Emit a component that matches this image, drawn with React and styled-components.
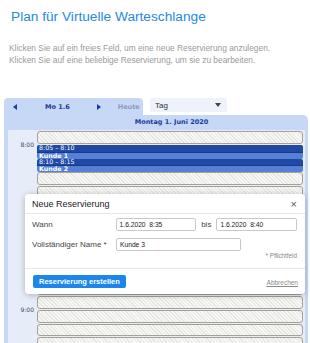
import React from 'react';
import styled, {createGlobalStyle} from 'styled-components';

const GlobalStyle = createGlobalStyle`
    body {
        margin: 0;
        background: #fff;
        font-family: 'Liberation Sans', Arial, sans-serif;
    }
`

const Page = styled.div`
    width: 310px;
    height: 343px;
    overflow: hidden;
    padding: 8px 0 0 0;
    box-sizing: border-box;
`

const Title = styled.h1`
    margin: 0 0 0 11px;
    font-size: 13.7px;
    line-height: 18px;
    font-weight: normal;
    color: #2689e3;
`

const Hint = styled.p`
    margin: 16px 0 0 9px;
    font-size: 8.4px;
    line-height: 12px;
    color: #9a9a9a;
`

const Calendar = styled.div`
    position: relative;
    margin: 32px 2px 0 4px;
    font-family: 'DejaVu Sans', Verdana, sans-serif;
`

const TopRow = styled.div`
    display: flex;
    align-items: flex-start;
    height: 17px;
`

const NavTab = styled.div`
    width: 139px;
    height: 17px;
    background: #c7d8f6;
    border-radius: 4px 4px 0 0;
    display: flex;
    align-items: center;
    box-sizing: border-box;
    padding: 1px 0 0 9px;
`

const Arrow = styled.span`
    width: 0;
    height: 0;
    border-top: 3.5px solid transparent;
    border-bottom: 3.5px solid transparent;
    border-right: ${p => p.dir === 'left' ? '4px solid #1b3a9e' : 'none'};
    border-left: ${p => p.dir === 'right' ? '4px solid #1b3a9e' : 'none'};
    margin-right: ${p => p.gap}px;
`

const NavLabel = styled.span`
    font-size: 6.5px;
    font-weight: bold;
    color: ${p => p.muted ? '#8d9bb5' : '#1b3a9e'};
    margin-right: ${p => p.gap}px;
`

const Select = styled.div`
    margin: 0 0 0 7px;
    width: 77px;
    height: 14px;
    background: #eef2fa;
    border-radius: 2px;
    display: flex;
    align-items: center;
    justify-content: space-between;
    box-sizing: border-box;
    padding: 0 6px 0 5px;
    font-family: 'Liberation Sans', Arial, sans-serif;
    font-size: 8px;
    color: #333;
`

const Caret = styled.span`
    width: 0;
    height: 0;
    border-left: 3px solid transparent;
    border-right: 3px solid transparent;
    border-top: 4px solid #444;
`

const Panel = styled.div`
    background: #c7d8f6;
    border-radius: 0 5px 0 0;
    padding: 0 3px 0 4px;
`

const DayHeader = styled.div`
    height: 15px;
    line-height: 15px;
    text-align: center;
    font-size: 6.5px;
    font-weight: bold;
    color: #1b3a9e;
    padding-left: 30px;
`

const Grid = styled.div`
    display: grid;
    grid-template-columns: 29px 1fr;
    grid-auto-rows: 13.75px;
    background: #e6edf9;
    padding: 1px 2px 0 0;
`

const TimeLabel = styled.div`
    grid-column: 1;
    grid-row: ${p => p.row};
    font-size: 6px;
    line-height: 8px;
    color: #3a4a6a;
    text-align: right;
    padding-right: 3px;
    margin-top: -4px;
`

const Slot = styled.div`
    grid-column: 2;
    grid-row: ${p => p.row};
    height: 12.75px;
    box-sizing: border-box;
    border: 1px solid #a3a294;
    border-bottom-width: 1.5px;
    border-radius: 3px;
    background: repeating-linear-gradient(45deg, #f7f7f6 0 1.6px, #e6e6e3 1.6px 2.6px);
`

const Event = styled.div`
    grid-column: 2;
    grid-row: ${p => p.row};
    height: 13.75px;
    display: flex;
    flex-direction: column;
    border-radius: 2px;
    overflow: hidden;
    color: #fff;
    font-size: 6.3px;
`

const EventPart = styled.div`
    flex: 1;
    line-height: 6.9px;
    padding-left: 2px;
    font-weight: ${p => p.strong ? 'bold' : 'normal'};
    background: ${p => p.strong ? '#5580d6' : '#2049a6'};
    border-bottom: ${p => p.strong ? 'none' : '0.5px solid #173a8a'};
`

const Dialog = styled.div`
    position: absolute;
    left: 21px;
    top: 96px;
    width: 280px;
    background: #fff;
    border-radius: 4px;
    box-shadow: 0 1px 6px rgba(0, 0, 0, 0.25);
    font-family: 'Liberation Sans', Arial, sans-serif;
    color: #333;
`

const DialogHeader = styled.div`
    height: 19px;
    display: flex;
    align-items: center;
    justify-content: space-between;
    padding: 0 8px 0 7px;
    border-bottom: 1px solid #e6e6e6;
    font-size: 9px;
    color: #222;
`

const Close = styled.span`
    font-size: 11px;
    color: #555;
`

const DialogBody = styled.div`
    padding: 4px 8px 0 7px;
    border-bottom: 1px solid #e6e6e6;
    height: 50px;
`

const FieldRow = styled.div`
    display: flex;
    align-items: center;
    margin-bottom: ${p => p.gap}px;
`

const Label = styled.span`
    width: 84px;
    font-size: 8px;
    color: #444;
`

const Input = styled.div`
    width: ${p => p.w}px;
    height: 13px;
    box-sizing: border-box;
    border: 1px solid #c9c9c9;
    border-radius: 2px;
    font-size: 6.7px;
    line-height: 11px;
    padding-left: 3px;
    white-space: pre;
    color: #222;
`

const Between = styled.span`
    font-size: 8px;
    color: #444;
    margin: 0 5px;
`

const Required = styled.div`
    text-align: right;
    font-size: 6.3px;
    color: #888;
    margin-top: -1px;
`

const DialogFooter = styled.div`
    height: 25px;
    display: flex;
    align-items: center;
    justify-content: space-between;
    padding: 0 7px 0 8px;
`

const Primary = styled.div`
    height: 13px;
    line-height: 13px;
    padding: 0 6px;
    background: #1e86e8;
    border-radius: 2px;
    color: #fff;
    font-size: 7.5px;
    font-weight: bold;
`

const Cancel = styled.span`
    font-size: 6.5px;
    color: #8a8a8a;
    text-decoration: underline;
    margin-top: 1px;
`

const slotRows = [1, 4, 5, 6, 7, 8, 9, 10, 11, 12, 13, 14, 15, 16];

const App = () => {
    return (
        <Page>
            <GlobalStyle />
            <Title>Plan für Virtuelle Warteschlange</Title>
            <Hint>
                Klicken Sie auf ein freies Feld, um eine neue Reservierung anzulegen.<br />
                Klicken Sie auf eine beliebige Reservierung, um sie zu bearbeiten.
            </Hint>
            <Calendar>
                <TopRow>
                    <NavTab>
                        <Arrow dir='left' gap={28} />
                        <NavLabel gap={27}>Mo 1.6</NavLabel>
                        <Arrow dir='right' gap={17} />
                        <NavLabel muted>Heute</NavLabel>
                    </NavTab>
                    <Select>
                        <span>Tag</span>
                        <Caret />
                    </Select>
                </TopRow>
                <Panel>
                    <DayHeader>Montag 1. Juni 2020</DayHeader>
                    <Grid>
                        <TimeLabel row={2}>8:00</TimeLabel>
                        <TimeLabel row={14}>9:00</TimeLabel>
                        {slotRows.map(r => <Slot key={r} row={r} />)}
                        <Event row={2}>
                            <EventPart>8:05 – 8:10</EventPart>
                            <EventPart strong>Kunde 1</EventPart>
                        </Event>
                        <Event row={3}>
                            <EventPart>8:10 – 8:15</EventPart>
                            <EventPart strong>Kunde 2</EventPart>
                        </Event>
                    </Grid>
                </Panel>
                <Dialog>
                    <DialogHeader>
                        <span>Neue Reservierung</span>
                        <Close>×</Close>
                    </DialogHeader>
                    <DialogBody>
                        <FieldRow gap={7}>
                            <Label>Wann</Label>
                            <Input w={81}>1.6.2020  8:35</Input>
                            <Between>bis</Between>
                            <Input w={81}>1.6.2020  8:40</Input>
                        </FieldRow>
                        <FieldRow gap={2}>
                            <Label>Vollständiger Name *</Label>
                            <Input w={125}>Kunde 3</Input>
                        </FieldRow>
                        <Required>* Pflichtfeld</Required>
                    </DialogBody>
                    <DialogFooter>
                        <Primary>Reservierung erstellen</Primary>
                        <Cancel>Abbrechen</Cancel>
                    </DialogFooter>
                </Dialog>
            </Calendar>
        </Page>
    );
}

export default App;
